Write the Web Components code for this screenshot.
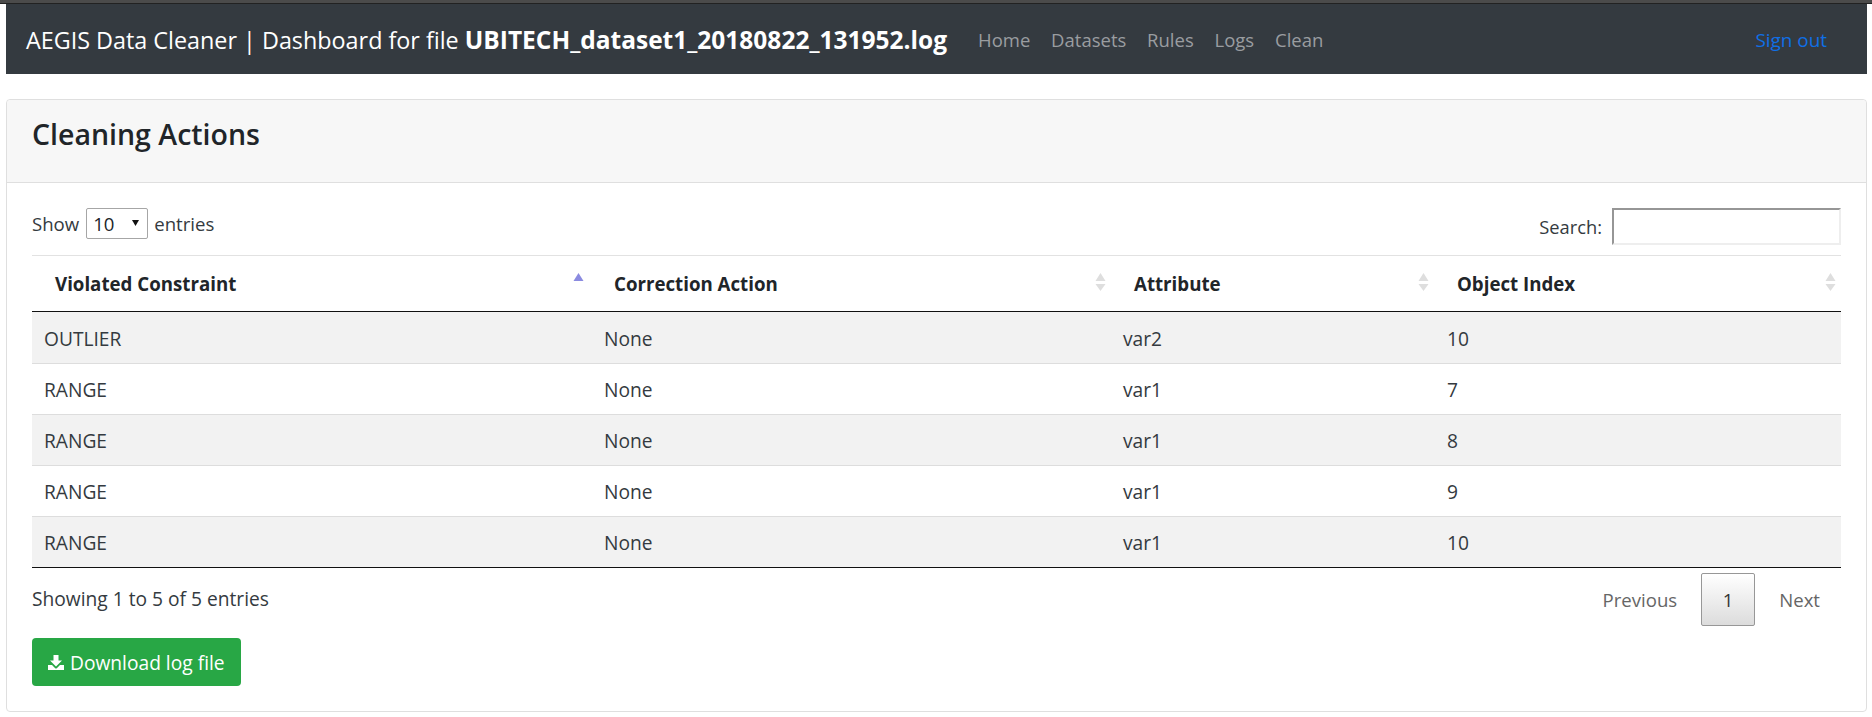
<!DOCTYPE html>
<html>
<head>
<meta charset="utf-8">
<style>
  html, body { margin: 0; background: #fff; }
  body { font-family: "Open Sans", "Noto Sans", sans-serif; font-size: 18.6px; color: #212529; }
</style>
</head>
<body>
<app-navbar file="UBITECH_dataset1_20180822_131952.log"></app-navbar>
<action-card heading="Cleaning Actions">
  <actions-table></actions-table>
  <download-button>Download log file</download-button>
</action-card>

<script>
class AppNavbar extends HTMLElement {
    constructor() {
        super();
        const root = this.attachShadow({mode: 'open'});
        root.innerHTML = `
        <style>
            :host { display: block; }
            .strip { height: 3px; background: #4b4b4b; border-bottom: 1px solid #222; }
            nav {
                display: flex;
                align-items: center;
                height: 70px;
                margin: 0 5px 0 6px;
                padding: 0 40px 0 20px;
                background: #343a40;
            }
            .brand { color: #fff; font-size: 23.35px; white-space: nowrap; margin-right: 31px; }
            .brand b { font-weight: 700; font-size: 24.5px; }
            .links { display: flex; gap: 20.8px; flex: 1; }
            a { color: #9a9da0; text-decoration: none; font-size: 18.5px; }
            a.out { color: #0f6fe6; font-size: 18.9px; padding-top: 1px; }
        </style>
        <div class="strip"></div>
        <nav>
            <span class="brand">AEGIS Data Cleaner | Dashboard for file <b>${this.getAttribute("file")}</b></span>
            <div class="links">
                <a href="#">Home</a><a href="#">Datasets</a><a href="#">Rules</a><a href="#">Logs</a><a href="#">Clean</a>
            </div>
            <a class="out" href="#">Sign out</a>
        </nav>`;
    }
}

class ActionCard extends HTMLElement {
    constructor() {
        super();
        const root = this.attachShadow({mode: 'open'});
        root.innerHTML = `
        <style>
            :host {
                display: block;
                margin: 25px 5px 0 6px;
                border: 1px solid #dfdfdf;
                border-radius: 4px;
                height: 613px;
                box-sizing: border-box;
            }
            header {
                height: 83px;
                box-sizing: border-box;
                padding: 0 25px 14px 25px;
                display: flex;
                align-items: center;
                background: #f7f7f7;
                border-bottom: 1px solid #dfdfdf;
                border-radius: 4px 4px 0 0;
            }
            h4 { margin: 0; font-size: 28.5px; font-weight: 600; color: #212529; }
            .body { padding: 0 25px; }
        </style>
        <header><h4>${this.getAttribute("heading")}</h4></header>
        <div class="body"><slot></slot></div>`;
    }
}

class SortArrows extends HTMLElement {
    constructor() {
        super();
        const root = this.attachShadow({mode: 'open'});
        const asc = this.hasAttribute("asc");
        root.innerHTML = `
        <style>
            :host { display: block; width: 11px; height: 18px; flex: none; }
            svg { display: block; }
        </style>
        <svg width="11" height="18" viewBox="0 0 11 18">
            <path d="M5.5 0 L10.5 8 L.5 8 Z" fill="${asc ? "#8b8be0" : "#dedede"}"/>
            ${asc ? "" : '<path d="M.5 11 L10.5 11 L5.5 18 Z" fill="#dedede"/>'}
        </svg>`;
    }
}

class ActionsTable extends HTMLElement {
    static get columns() { return ["Violated Constraint", "Correction Action", "Attribute", "Object Index"]; }
    static get rows() {
        return [
            ["OUTLIER", "None", "var2", "10"],
            ["RANGE", "None", "var1", "7"],
            ["RANGE", "None", "var1", "8"],
            ["RANGE", "None", "var1", "9"],
            ["RANGE", "None", "var1", "10"],
        ];
    }

    constructor() {
        super();
        const root = this.attachShadow({mode: 'open'});
        const head = this.constructor.columns.map((c, i) => `
            <th><div><span>${c}</span><sort-arrows ${i == 0 ? "asc" : ""}></sort-arrows></div></th>`).join("");
        const body = this.constructor.rows.map(r => `
            <tr>${r.map(c => `<td>${c}</td>`).join("")}</tr>`).join("");
        root.innerHTML = `
        <style>
            :host { display: block; color: #343a40; }
            .top { display: flex; justify-content: space-between; align-items: flex-start; height: 72px; box-sizing: border-box; padding-top: 25px; }
            .top .side { display: flex; align-items: center; }
            .sel { position: relative; display: block; margin: 0 6px 0 7px; }
            select {
                appearance: none;
                display: block;
                width: 62px;
                height: 31px;
                box-sizing: border-box;
                padding: 0 0 0 6px;
                font: inherit;
                color: #212529;
                background: #fff;
                border: 1px solid #a6a6a6;
                border-radius: 2px;
            }
            .sel svg { position: absolute; left: 46px; top: 12px; pointer-events: none; }
            .search { margin-right: 10px; font-size: 18.3px; }
            input {
                display: block;
                width: 229px;
                height: 37px;
                box-sizing: border-box;
                padding: 0;
                border: 2px solid #eee;
                border-top-color: #969696;
                border-left-color: #969696;
                background: #fff;
            }
            table { width: 100%; table-layout: fixed; border-collapse: collapse; border-top: 1px solid #e2e2e2; }
            th { height: 56px; padding: 0 5px 0 22px; text-align: left; font-weight: 700; font-size: 18.7px; color: #212529; border-bottom: 1px solid #111; box-sizing: border-box; }
            th div { display: flex; justify-content: space-between; align-items: flex-start; }
            th span { line-height: 24px; }
            th sort-arrows { margin-top: 1px; }
            th:first-child { padding-left: 23px; padding-right: 8px; }
            th:nth-child(3) { padding-left: 23px; padding-right: 6px; }
            td { height: 51px; padding: 0 12px; box-sizing: border-box; border-bottom: 1px solid #ddd; color: #343a40; font-size: 19.2px; }
            tbody tr:first-child td { height: 52px; padding-top: 1px; }
            tbody tr:nth-child(odd) td { background: #f2f2f2; }
            tbody tr:last-child td { border-bottom: 1px solid #111; }
            .foot { display: flex; justify-content: space-between; align-items: flex-start; height: 70px; box-sizing: border-box; padding-top: 5px; }
            .info { line-height: 52px; font-size: 19.2px; }
            .pages { display: flex; align-items: center; gap: 24px; margin-right: 21px; color: #666; line-height: 53px; }
            .cur {
                width: 54px;
                height: 53px;
                box-sizing: border-box;
                display: flex;
                align-items: center;
                justify-content: center;
                color: #333;
                border: 1px solid #979797;
                border-radius: 2px;
                background: linear-gradient(#fff, #dcdcdc);
            }
        </style>
        <div class="top">
            <div class="side">Show
                <span class="sel">
                    <select><option>10</option><option>25</option><option>50</option><option>100</option></select>
                    <svg width="7" height="6" viewBox="0 0 7 6"><path d="M0 0 L7 0 L3.5 6 Z" fill="#111"/></svg>
                </span>
                entries</div>
            <div class="side"><span class="search">Search:</span><input type="search"></div>
        </div>
        <table>
            <colgroup><col style="width:560px"><col style="width:519px"><col style="width:324px"><col></colgroup>
            <thead><tr>${head}</tr></thead>
            <tbody>${body}</tbody>
        </table>
        <div class="foot">
            <span class="info">Showing 1 to 5 of 5 entries</span>
            <div class="pages"><span>Previous</span><span class="cur">1</span><span>Next</span></div>
        </div>`;
    }
}

class DownloadButton extends HTMLElement {
    constructor() {
        super();
        const root = this.attachShadow({mode: 'open'});
        root.innerHTML = `
        <style>
            :host {
                display: inline-flex;
                align-items: center;
                gap: 6px;
                height: 48px;
                padding: 0 16px;
                color: #fff;
                background: #28a745;
                border-radius: 4px;
                font-size: 19.2px;
                box-sizing: border-box;
            }
            svg { display: block; }
        </style>
        <svg width="16" height="15" viewBox="0 0 16 15">
            <path d="M5.5 0 H10.5 V5.5 H14 L8 11.5 L2 5.5 H5.5 Z" fill="#fff"/>
            <path d="M0 10 H4 L7 13 Q8 14 9 13 L12 10 H16 V15 H0 Z" fill="#fff"/>
        </svg>
        <slot></slot>`;
    }
}

customElements.define("app-navbar", AppNavbar);
customElements.define("action-card", ActionCard);
customElements.define("sort-arrows", SortArrows);
customElements.define("actions-table", ActionsTable);
customElements.define("download-button", DownloadButton);
</script>
</body>
</html>
